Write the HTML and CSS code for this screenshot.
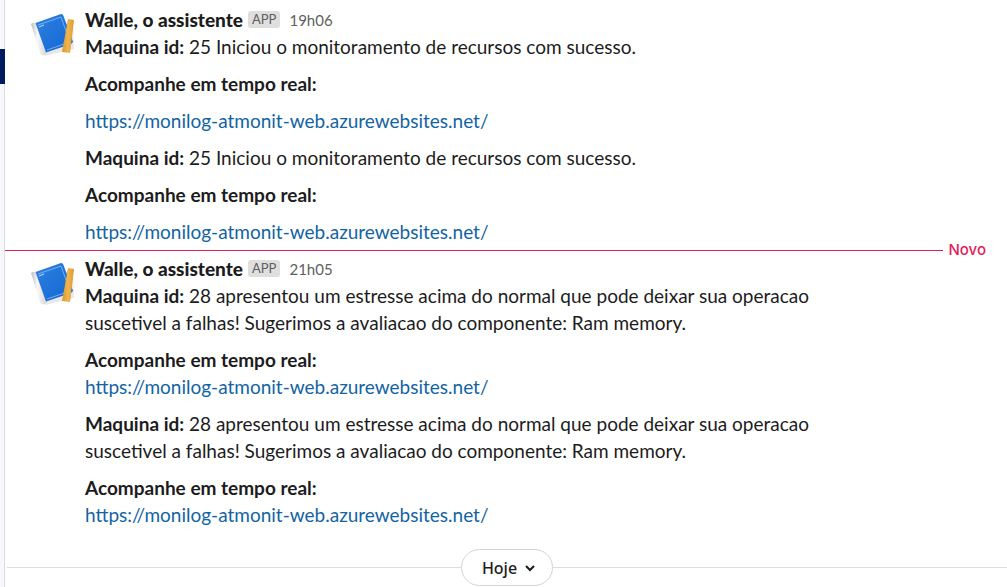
FILE: index.html
```
<!DOCTYPE html>
<html lang="pt-BR">
<head>
<meta charset="utf-8">
<title>Walle, o assistente</title>
<link rel="stylesheet" href="styles.css">
</head>
<body>
<svg class="defs" aria-hidden="true">
  <defs>
    <linearGradient id="cover" x1="0" y1="0" x2="1" y2="1">
      <stop offset="0" stop-color="#2d82e2"/><stop offset="1" stop-color="#1265d0"/>
    </linearGradient>
    <linearGradient id="spine" x1="0" y1="0" x2="1" y2="0">
      <stop offset="0" stop-color="#bdbdbf"/><stop offset=".4" stop-color="#f8f8f8"/><stop offset="1" stop-color="#d4d4d6"/>
    </linearGradient>
    <linearGradient id="ruler" x1="0" y1="0" x2="1" y2="0">
      <stop offset="0" stop-color="#dc952d"/><stop offset=".5" stop-color="#f0b64f"/><stop offset="1" stop-color="#e0982e"/>
    </linearGradient>
    <symbol id="book" viewBox="0 0 46 46">
      <path d="M3 14 15 45 44 38 43 12Z" fill="#000" opacity=".09"/>
      <path d="M1 13Q3 11 6 12L17 42 15 44Q11 45 10 42Z" fill="url(#spine)"/>
      <path d="M5.500 12 31 3Q33 3 33.500 5L43 31 41 33 16 41.500Z" fill="url(#cover)"/>
      <path d="M8 14 31 6 40 31 17 39" fill="none" stroke="#8dbcf3" stroke-width=".8"/>
      <path d="M9 16 14 14" stroke="#c2dcfa" stroke-width="1"/>
      <path d="M37 10 36 41 40 42 43 13Z" fill="#064190" opacity=".2"/>
      <path d="M38 8 44 9 40 42 32 41Z" fill="url(#ruler)"/>
    </symbol>
  </defs>
</svg>
<div class="app">
  <aside class="rail"><div class="rail-active"></div></aside>
  <main class="feed">
    <article class="message">
      <svg class="avatar" role="img" aria-label="Walle"><use href="#book"/></svg>
      <div class="body">
        <header class="head"><strong class="name">Walle, o assistente</strong><span class="badge">APP</span><time class="time">19h06</time></header>
        <p class="text"><b>Maquina id:</b> 25 Iniciou o monitoramento de recursos com sucesso.</p>
        <p class="text"><b>Acompanhe em tempo real:</b></p>
        <p class="text"><a href="https://monilog-atmonit-web.azurewebsites.net/">https://monilog-atmonit-web.azurewebsites.net/</a></p>
        <p class="text"><b>Maquina id:</b> 25 Iniciou o monitoramento de recursos com sucesso.</p>
        <p class="text"><b>Acompanhe em tempo real:</b></p>
        <p class="text"><a href="https://monilog-atmonit-web.azurewebsites.net/">https://monilog-atmonit-web.azurewebsites.net/</a></p>
      </div>
    </article>
    <div class="unread"><span class="unread-label">Novo</span></div>
    <article class="message">
      <svg class="avatar" role="img" aria-label="Walle"><use href="#book"/></svg>
      <div class="body">
        <header class="head"><strong class="name">Walle, o assistente</strong><span class="badge">APP</span><time class="time">21h05</time></header>
        <p class="text"><b>Maquina id:</b> 28 apresentou um estresse acima do normal que pode deixar sua operacao<br>suscetivel a falhas! Sugerimos a avaliacao do componente: Ram memory.</p>
        <p class="text"><b>Acompanhe em tempo real:</b><br><a href="https://monilog-atmonit-web.azurewebsites.net/">https://monilog-atmonit-web.azurewebsites.net/</a></p>
        <p class="text"><b>Maquina id:</b> 28 apresentou um estresse acima do normal que pode deixar sua operacao<br>suscetivel a falhas! Sugerimos a avaliacao do componente: Ram memory.</p>
        <p class="text"><b>Acompanhe em tempo real:</b><br><a href="https://monilog-atmonit-web.azurewebsites.net/">https://monilog-atmonit-web.azurewebsites.net/</a></p>
      </div>
    </article>
    <div class="day">
      <button class="day-button" type="button">Hoje
        <svg class="chevron" viewBox="0 0 10 10" aria-hidden="true"><path d="M1 3l4 4 4-4" fill="none" stroke="currentColor" stroke-width="2"/></svg>
      </button>
    </div>
  </main>
</div>
</body>
</html>
```
FILE: styles.css
```
* { box-sizing: border-box; }
body {
  margin: 0;
  background: #fff;
  color: #1d1c1d;
  font: 19px/27px Lato, "Liberation Sans", sans-serif;
}
.defs { position: absolute; width: 0; height: 0; }
.app { display: flex; min-height: 100vh; }
.rail {
  flex: none;
  width: 5px;
  padding-top: 49px;
  background: #f8f8fa;
  border-right: 1px solid #dddde8;
}
.rail-active { width: 5px; height: 35px; background: #001a60; }
.feed { flex: 1; min-width: 0; padding-top: 6px; }
.message { display: flex; gap: 9px; padding-left: 25px; }
.avatar { flex: none; width: 46px; height: 46px; margin-top: 5px; }
.body { max-width: 740px; }
.head { display: flex; align-items: center; }
.name { font-weight: 900; }
.badge {
  margin-left: 5px;
  padding: 0 4px;
  border-radius: 3px;
  background: #dfdfdf;
  color: #616061;
  font-size: 13px;
  line-height: 17px;
}
.time { margin-left: 9px; padding-top: 2px; color: #616061; font-size: 15px; line-height: 25px; }
.text { margin: 0 0 10px; }
.text:last-child { margin-bottom: 0; }
.text b { font-weight: 700; }
.text a { color: #1264a3; text-decoration: none; }
.unread {
  display: flex;
  align-items: center;
  gap: 5px;
  height: 10px;
  padding-right: 21px;
  color: #e01e5a;
}
.unread::before { content: ""; flex: 1; height: 1px; background: #e01e5a; }
.unread-label { font: 500 15px/20px Inter, sans-serif; }
.day {
  display: flex;
  align-items: center;
  margin-top: 21px;
  padding-left: 2px;
}
.day::before, .day::after { content: ""; flex: 1; height: 1px; background: #dddddd; }
.day-button {
  display: flex;
  align-items: center;
  justify-content: center;
  gap: 8px;
  height: 37px;
  padding: 0 17px 0 20px;
  border: 1px solid #d4d4d4;
  border-radius: 19px;
  background: #fff;
  color: #1d1c1d;
  font: 500 16px/20px "Noto Sans", sans-serif;
}
.chevron { width: 10px; height: 10px; }
```
